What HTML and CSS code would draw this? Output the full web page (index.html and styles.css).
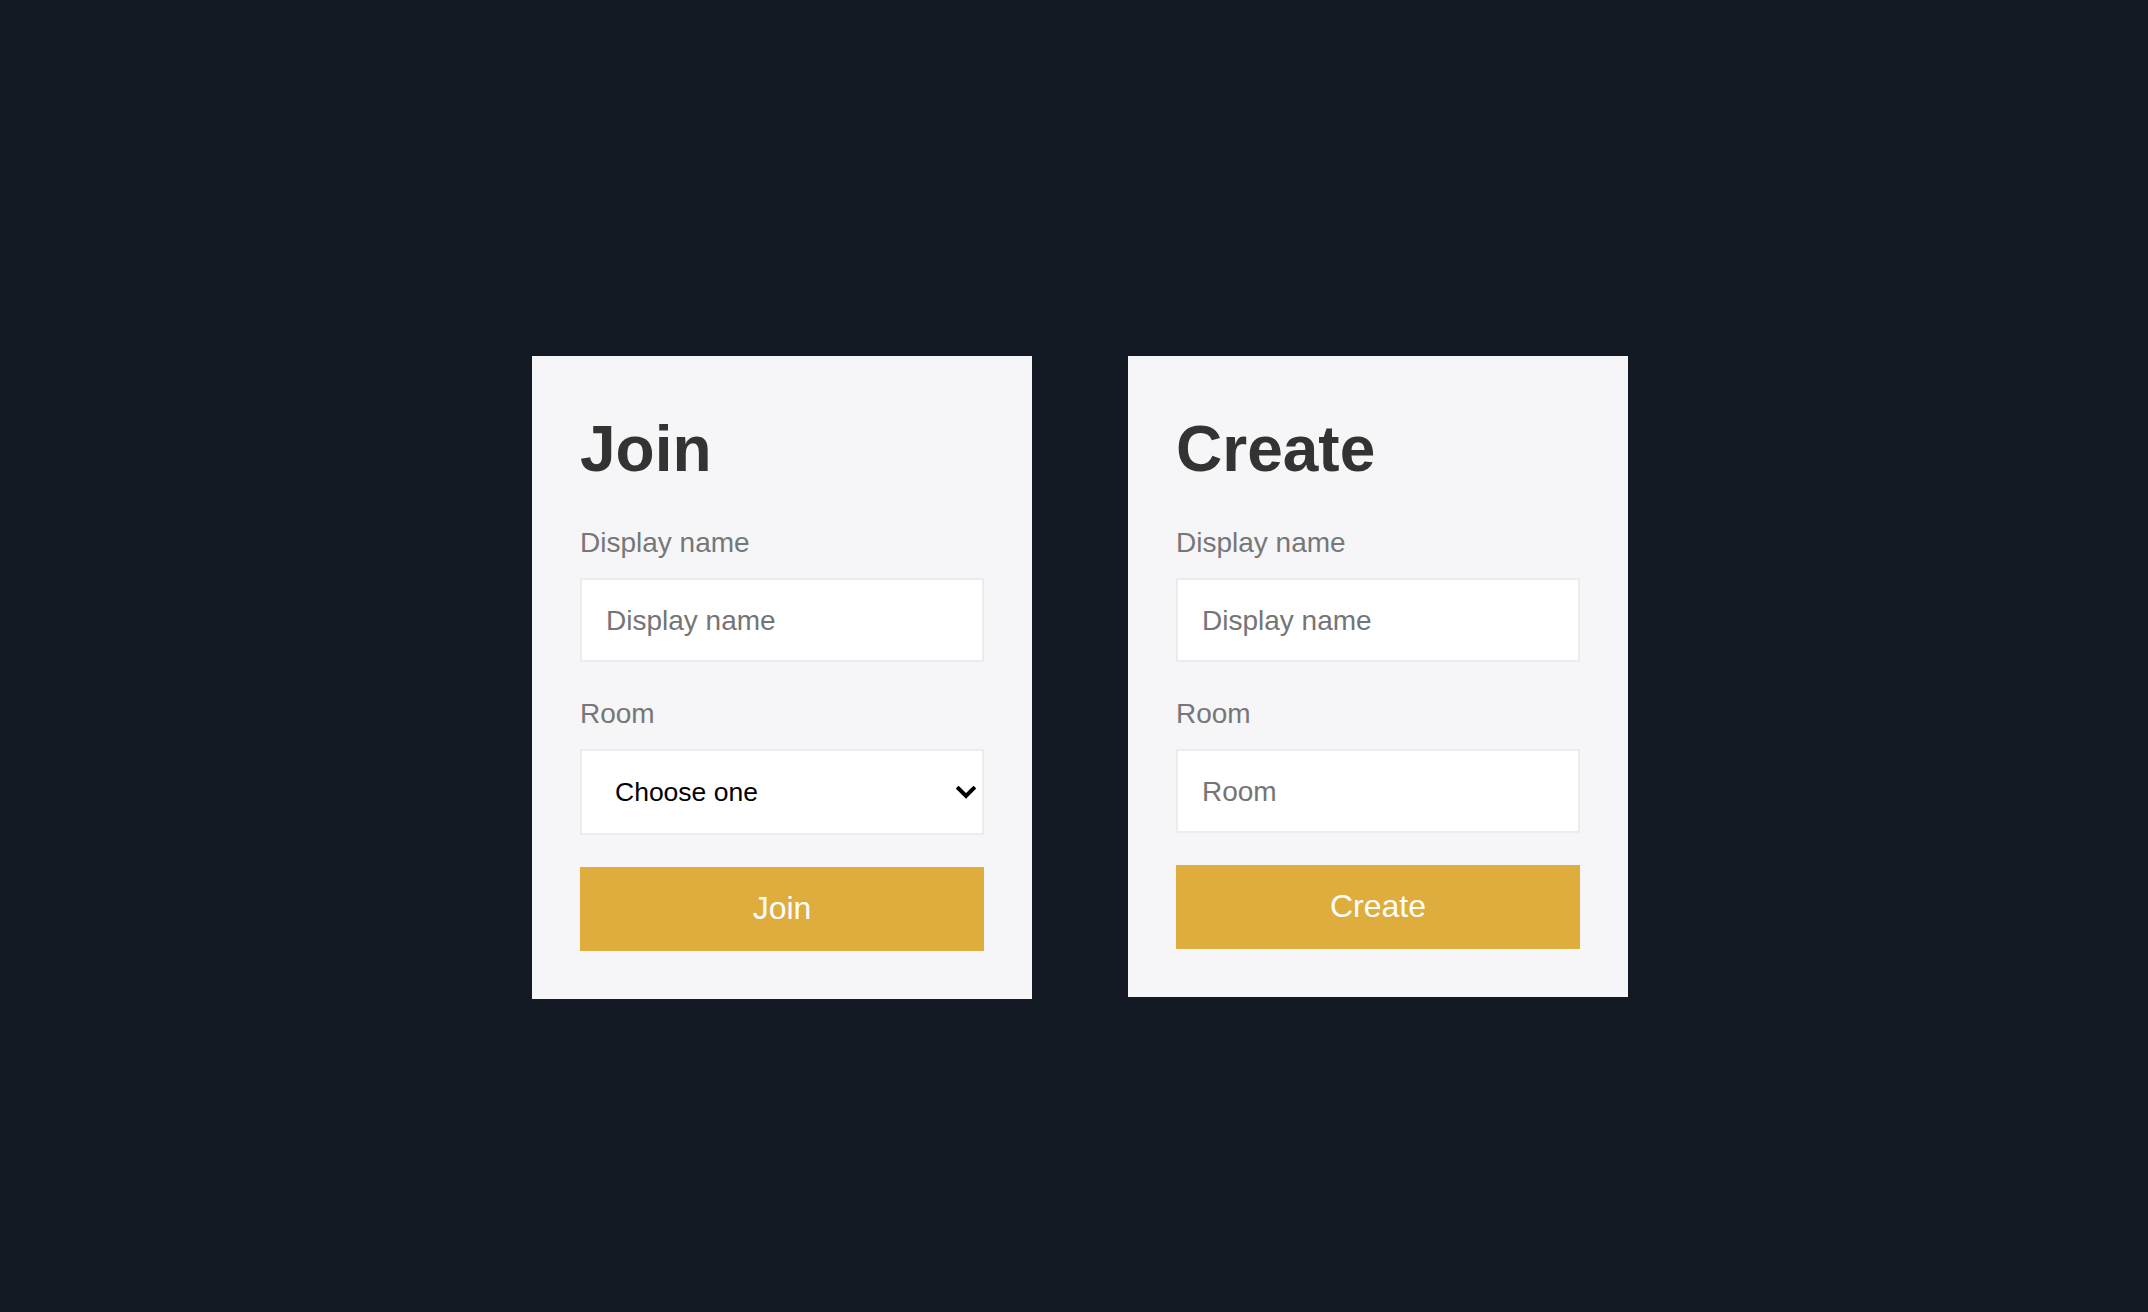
FILE: index.html
```html
<!DOCTYPE html>
<html lang="en">
<head>
<meta charset="utf-8">
<title>Join or Create</title>
<link rel="stylesheet" href="styles.css">
</head>
<body>
<main class="page">
  <form class="card">
    <h1 class="card-title">Join</h1>
    <label class="field-label" for="join-name">Display name</label>
    <input class="text-input" id="join-name" type="text" placeholder="Display name">
    <label class="field-label field-label--spaced" for="join-room">Room</label>
    <div class="select-wrap">
      <select class="select-input" id="join-room">
        <option>Choose one</option>
      </select>
      <svg class="select-chevron" width="20" height="13" viewBox="0 0 20 13" aria-hidden="true">
        <path d="M2.5 2.5 L10 10 L17.5 2.5" fill="none" stroke="#000" stroke-width="4" stroke-linecap="square"/>
      </svg>
    </div>
    <button class="btn" type="button">Join</button>
  </form>
  <form class="card">
    <h1 class="card-title">Create</h1>
    <label class="field-label" for="create-name">Display name</label>
    <input class="text-input" id="create-name" type="text" placeholder="Display name">
    <label class="field-label field-label--spaced" for="create-room">Room</label>
    <input class="text-input" id="create-room" type="text" placeholder="Room">
    <button class="btn" type="button">Create</button>
  </form>
</main>
</body>
</html>
```

FILE: styles.css
```css
* { box-sizing: border-box; }

html, body {
  margin: 0;
  padding: 0;
  height: 100%;
}

body {
  background: #141a24;
  font-family: "Liberation Sans", Arial, Helvetica, sans-serif;
}

.page {
  display: flex;
  align-items: flex-start;
  justify-content: center;
  gap: 96px;
  padding: 356px 0 0 12px;
}

.card {
  width: 500px;
  background: #f6f6f8;
  padding: 48px;
  display: flex;
  flex-direction: column;
}

.card-title {
  margin: 0 0 32px;
  font-size: 64px;
  line-height: 90px;
  font-weight: 700;
  color: #333333;
}

.field-label {
  display: block;
  font-size: 28px;
  line-height: 34px;
  color: #777777;
  margin-bottom: 18px;
}

.field-label--spaced {
  margin-top: 35px;
}

.text-input {
  display: block;
  width: 100%;
  height: 84px;
  border: 2px solid #ececee;
  background: #ffffff;
  padding: 2px 24px 0;
  font-family: "Liberation Sans", Arial, Helvetica, sans-serif;
  font-size: 28px;
  color: #333333;
  outline: none;
  border-radius: 0;
}

.text-input::placeholder {
  color: #757575;
  opacity: 1;
}

.select-wrap {
  position: relative;
}

.select-input {
  display: block;
  width: 100%;
  height: 86px;
  border: 2px solid #ececee;
  background: #ffffff;
  padding: 0 40px 0 33px;
  font-family: "Liberation Sans", Arial, Helvetica, sans-serif;
  font-size: 26.5px;
  color: #000000;
  appearance: none;
  -webkit-appearance: none;
  border-radius: 0;
  outline: none;
}

.select-chevron {
  position: absolute;
  right: 8px;
  top: 37px;
  pointer-events: none;
}

.btn {
  margin-top: 32px;
  width: 100%;
  height: 84px;
  border: none;
  border-radius: 0;
  background: #dfac3e;
  color: #ffffff;
  font-family: "Liberation Sans", Arial, Helvetica, sans-serif;
  font-size: 32px;
  padding: 0 0 2px;
  cursor: pointer;
}
```
